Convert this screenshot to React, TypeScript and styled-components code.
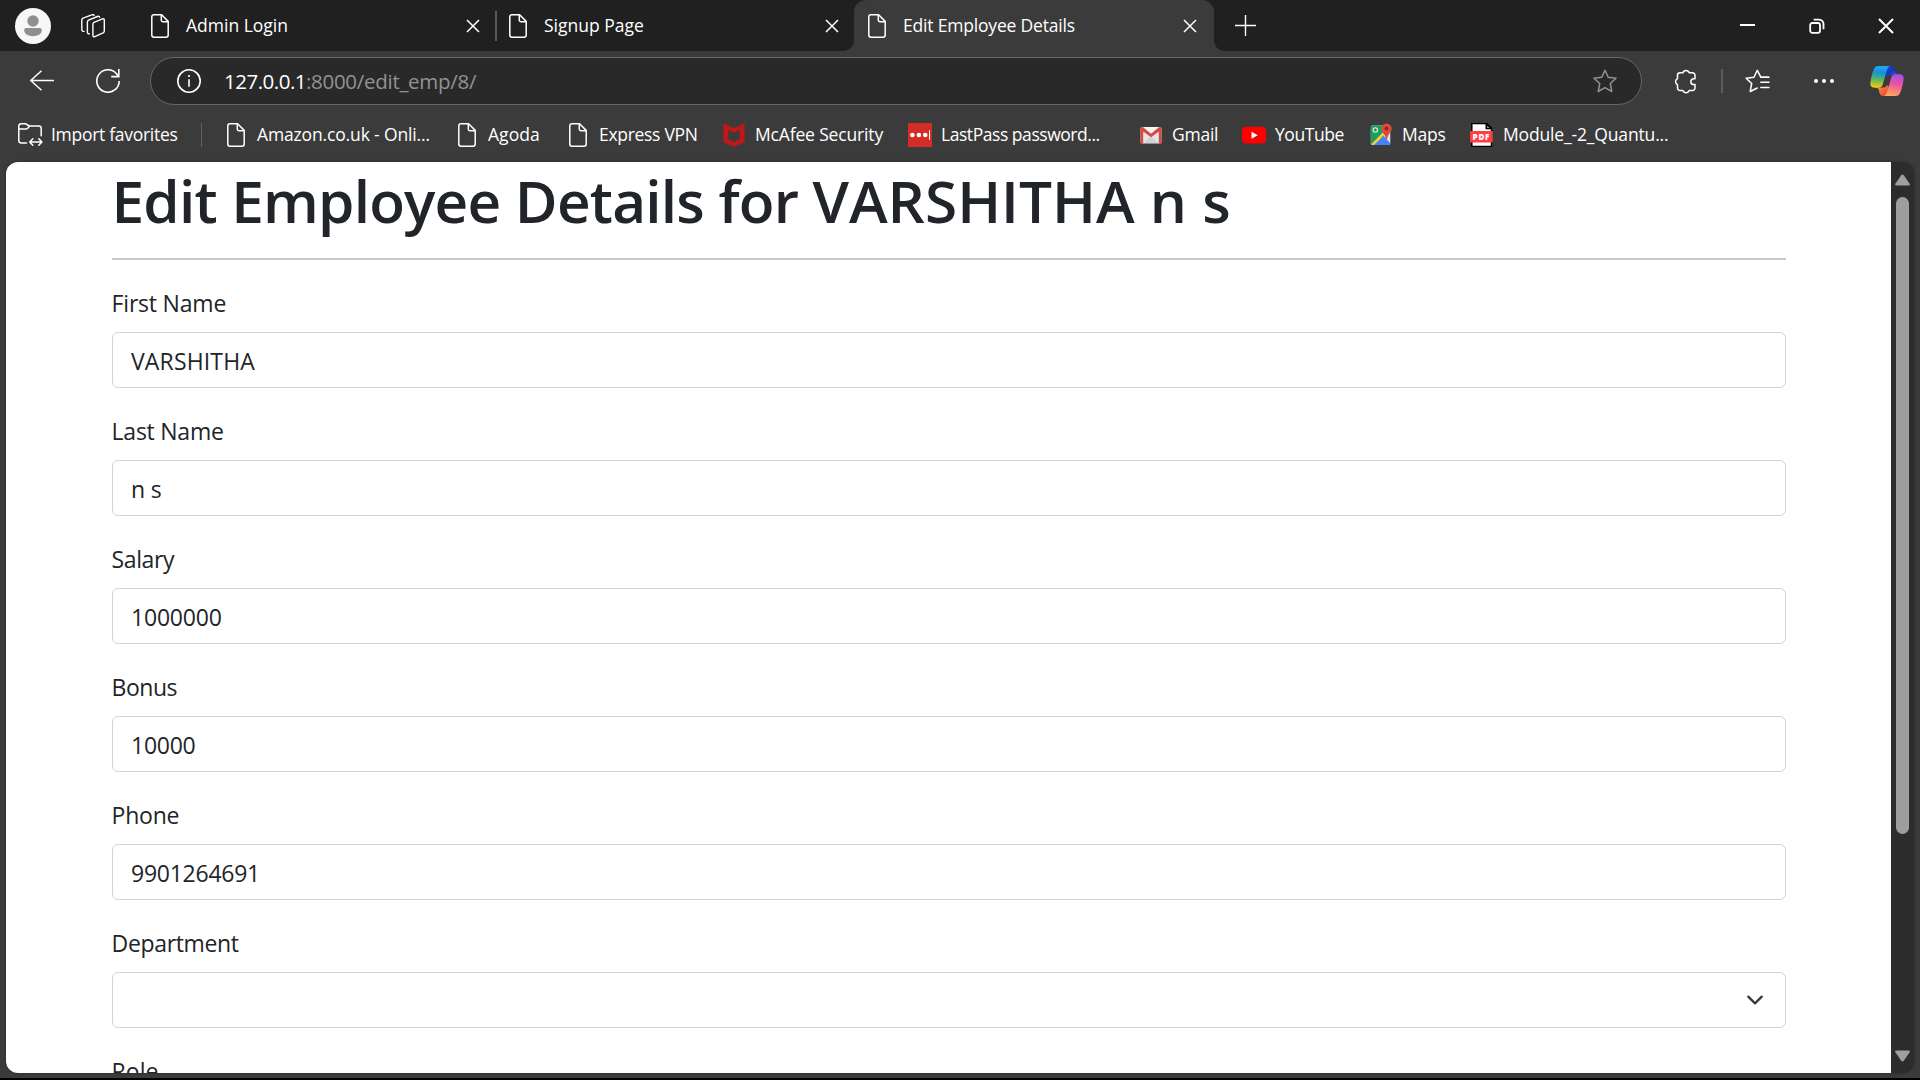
import React from "react";
import styled, { createGlobalStyle } from "styled-components";

const GlobalStyle = createGlobalStyle`
  * { box-sizing: border-box; }
  html, body { margin: 0; padding: 0; overflow: hidden; background: #000; }
  svg { display: block; flex: none; }
`;

const uiFont = `"Open Sans", "Noto Sans", sans-serif`;

const Browser = styled.div`
  width: 1920px;
  height: 1080px;
  display: flex;
  flex-direction: column;
  background: #3b3b3b;
  border-bottom: 2px solid #000;
  font-family: ${uiFont};
  color: #fff;
  overflow: hidden;
`;

const Text = styled.span<{ $track?: number }>`
  letter-spacing: ${(p) => p.$track ?? 0}px;
  white-space: pre;
`;

/* Tab strip */
const TabStrip = styled.div`
  flex: none;
  height: 51px;
  display: flex;
  align-items: center;
  background: #202020;
  font-size: 17.5px;
`;

const Profile = styled.div`
  width: 66px;
  height: 51px;
  padding: 8px 0 0 15px;
`;

const Workspaces = styled.div`
  width: 71px;
  padding-left: 15px;
`;

const Tab = styled.div<{ $width: number; $end: number; $active?: boolean }>`
  position: relative;
  width: ${(p) => p.$width}px;
  height: 51px;
  display: flex;
  align-items: center;
  padding: 0 ${(p) => p.$end}px 0 14px;
  border-radius: 12px 12px 0 0;
  background: ${(p) => (p.$active ? "#3b3b3b" : "transparent")};

  &::before,
  &::after {
    content: "";
    display: ${(p) => (p.$active ? "block" : "none")};
    position: absolute;
    bottom: 0;
    width: 10px;
    height: 10px;
  }
  &::before {
    left: -10px;
    background: radial-gradient(circle at 0 0, transparent 9.5px, #3b3b3b 10px);
  }
  &::after {
    right: -10px;
    background: radial-gradient(circle at 100% 0, transparent 9.5px, #3b3b3b 10px);
  }
`;

const TabTitle = styled(Text)`
  flex: 1;
  margin-left: 17px;
  padding-bottom: 1.5px;
`;

const TabDivider = styled.div`
  width: 2px;
  height: 30px;
  margin-right: -2px;
  background: #5a5a5a;
`;

const NewTab = styled.div`
  margin-left: 21px;
  padding-bottom: 1px;
`;

const WindowControls = styled.div`
  margin-left: auto;
  display: flex;
  gap: 53px;
  padding-right: 26px;
`;

/* Toolbar */
const Toolbar = styled.div`
  flex: none;
  height: 60px;
  padding-top: 6px;
  display: flex;
  align-items: flex-start;
`;

const ToolSlot = styled.div<{ $left: number }>`
  height: 48px;
  margin-left: ${(p) => p.$left}px;
  display: flex;
  align-items: center;
`;

const AddressBar = styled.div`
  width: 1492px;
  height: 48px;
  margin-left: 30px;
  padding: 0 24px 0 26px;
  display: flex;
  align-items: center;
  border: 1.5px solid #666;
  border-radius: 24px;
  background: #292929;
  font-size: 20.5px;
`;

const Host = styled(Text)`
  margin-left: 23px;
  color: #fff;
`;

const Path = styled(Text)`
  flex: 1;
  color: #929292;
`;

const ToolDivider = styled.div`
  width: 2px;
  height: 24px;
  background: #5c5c5c;
`;

/* Favourites bar */
const Favorites = styled.div`
  flex: none;
  height: 51px;
  padding: 0 0 3px 18px;
  display: flex;
  align-items: center;
  font-size: 17.5px;
`;

const Favorite = styled.div<{ $width: number; $gap?: number }>`
  width: ${(p) => p.$width}px;
  height: 24px;
  display: flex;
  align-items: center;
  gap: ${(p) => p.$gap ?? 9}px;
`;

const FavoriteName = styled(Text)`
  padding-bottom: 1.5px;
`;

const FavoriteDivider = styled.div`
  width: 1px;
  height: 24px;
  margin-right: 22px;
  background: #5f5f5f;
`;

/* Page */
const Viewport = styled.div`
  flex: none;
  width: 1908px;
  height: 911px;
  margin-left: 6px;
  display: flex;
  border-radius: 12px;
  overflow: hidden;
  background: #2c2c2c;
  box-shadow: 0 0 3px rgba(0, 0, 0, 0.35);
`;

const Page = styled.main`
  width: 1885px;
  height: 911px;
  padding: 2px 105px 0 106px;
  background: #fff;
  color: #212529;
  overflow: hidden;
`;

const Heading = styled.h1`
  margin: 0 0 0 -0.5px;
  font-size: 58.5px;
  line-height: 72px;
  font-weight: 600;
`;

const Rule = styled.hr`
  margin: 22px 0 24px;
  border: 0;
  height: 2px;
  background: #c8c8c8;
`;

const Field = styled.div`
  margin-bottom: 24px;
`;

const Label = styled.div<{ $track?: number }>`
  height: 48px;
  padding-top: 1px;
  margin-left: -0.4px;
  font-size: 23px;
  line-height: 36px;
  letter-spacing: ${(p) => p.$track ?? 0}px;
`;

const Control = styled.div<{ $track?: number }>`
  height: 56px;
  padding: 1px 21px 0 18px;
  display: flex;
  align-items: center;
  border: 1px solid #ced4da;
  border-radius: 6px;
  background: #fff;
  font-size: 23px;
  letter-spacing: ${(p) => p.$track ?? 0}px;
`;

const Chevron = styled.svg`
  margin: 0 0 1px auto;
`;

const Scrollbar = styled.div`
  width: 23px;
  padding: 12px 4px 11px;
  display: flex;
  flex-direction: column;
  align-items: center;
`;

const Thumb = styled.div`
  width: 13px;
  height: 637px;
  margin: 11px 0 auto;
  border-radius: 7px;
  background: #9e9e9e;
`;

const FileIcon = () => (
  <svg width="18" height="24" viewBox="0 0 18 24" fill="none" stroke="#fff" strokeWidth="1.5" strokeLinejoin="round">
    <path d="M3 .8h7.6L17.2 7.400V21a2.200 2.200 0 0 1-2.200 2.200H3A2.200 2.200 0 0 1 .8 21V3A2.200 2.200 0 0 1 3 .8Z" />
    <path d="M10.300.8v5.200a1.700 1.700 0 0 0 1.700 1.700h5.200" />
  </svg>
);

const FavFile = styled.div`
  width: 24px;
  padding-left: 3px;
`;

const CloseIcon = () => (
  <svg width="14" height="14" viewBox="0 0 14 14" stroke="#fff" strokeWidth="1.5">
    <path d="m1 1 12 12M13 1 1 13" />
  </svg>
);

const ProfileIcon = () => (
  <svg width="36" height="36" viewBox="0 0 36 36">
    <circle cx="18" cy="18" r="18" fill="#f7f7f7" />
    <circle cx="18" cy="13" r="5.700" fill="#8f8f8f" />
    <path d="M11.500 20h13a2.200 2.200 0 0 1 2.300 2.300c0 3.800-4.200 5.900-8.800 5.900s-8.800-2.100-8.800-5.900a2.200 2.200 0 0 1 2.300-2.300Z" fill="#8f8f8f" />
  </svg>
);

const WorkspacesIcon = () => (
  <svg width="24" height="24" viewBox="0 0 24 24" fill="none" stroke="#fff" strokeWidth="1.400" strokeLinejoin="round" strokeLinecap="round">
    <path d="M13 8.300 21.500 4.900c1-.4 1.800.1 1.800 1.100v11c0 .9-.4 1.500-1.200 1.900l-8.300 3.700c-1 .4-1.900-.1-1.900-1.100V10.200c0-.9.300-1.500 1.100-1.900Z" />
    <path d="M8.300 19.800c-1.200.1-1.900-.5-1.900-1.500V8c0-.9.400-1.500 1.200-1.900l8.800-3.600c1-.4 1.900-.1 2.200.8" />
    <path d="M3 17.400c-1.300.1-2.200-.6-2.200-1.700V6c0-.9.400-1.500 1.200-1.900L10.800.8c1-.3 1.900-.1 2.300.6" />
  </svg>
);

const starPath = "M12 1.300l3.200 6.900 7.800 1-5.700 5.300 1.500 8-6.800-3.800-6.800 3.800 1.500-8L1 9.200l7.800-1Z";

const ImportIcon = () => (
  <svg width="25" height="24" viewBox="0 0 25 24" fill="none" stroke="#fff" strokeWidth="1.500" strokeLinejoin="round" strokeLinecap="round">
    <path d="M8.500 20H3.200A2.400 2.400 0 0 1 .8 17.600V3.200A2.400 2.400 0 0 1 3.200.8h4.600l3.400 2.200h9.600a2.400 2.400 0 0 1 2.400 2.400v7.400" />
    <path d="M.8 6h7c.8 0 1.400-.3 1.900-.8l1.800-2.100" />
    <path d="M12.200 19h11.500M14.800 15.800 11.700 19l3.100 3.200M20.800 15.800l3.100 3.200-3.100 3.200" />
  </svg>
);

const McAfeeIcon = () => (
  <svg width="24" height="24" viewBox="0 0 24 24">
    <path fillRule="evenodd" fill="#c01818" d="M1.400.3 12 5.200 22.600.3v18.800L12 24 1.400 19.100ZM6.300 7v9.200l5.700 2.700 5.700-2.700V7L12 9.800Z" />
  </svg>
);

const LastPassIcon = () => (
  <svg width="24" height="24" viewBox="0 0 24 24">
    <path fill="#d32d27" d="M0 0h24v24H0z" />
    <g fill="#fff">
      <circle cx="4.400" cy="12" r="2.300" /><circle cx="10.900" cy="12" r="2.300" /><circle cx="17.300" cy="12" r="2.300" />
      <path d="M21 7.200h1v9.600h-1z" />
    </g>
  </svg>
);

const GmailIcon = () => (
  <svg width="24" height="24" viewBox="0 0 24 24">
    <rect x="1.500" y="4" width="21" height="16.500" rx="1.500" fill="#e6e6e6" />
    <path d="m5 20 7-7.500 7 7.500Z" fill="#d2d2d2" />
    <path d="M4.500 4h15L12 10.500Z" fill="#f5f5f5" />
    <path d="M1.500 20.500V5.500A1.500 1.500 0 0 1 4 4.300l8 6.400 8-6.400a1.500 1.500 0 0 1 2.500 1.200v15h-2.700V8.400L12 14.200 4.200 8.400v12.100Z" fill="#d54b3f" />
  </svg>
);

const YouTubeIcon = () => (
  <svg width="24" height="24" viewBox="0 0 24 24">
    <rect x="0" y="3.700" width="24" height="16.800" rx="4" fill="#f00" />
    <path d="m9.500 8.700 6.200 3.500-6.200 3.500Z" fill="#fff" />
  </svg>
);

const MapsIcon = () => (
  <svg width="24" height="24" viewBox="0 0 24 24">
    <rect x="1.800" y="2.500" width="19.500" height="19.500" rx="1.500" fill="#e2e2e2" />
    <path d="M1.800 4A1.500 1.500 0 0 1 3.300 2.500h12L15 10 2 22Z" fill="#1f9d5b" />
    <path d="m3 22 8.700-9 8.800 9Z" fill="#4584f3" />
    <path d="m2.200 21.300 12-12.200 1.800 2.400L5 22H3.300Z" fill="#f7ca3b" />
    <path d="m11.800 15.200 2.600-2.600 7 7.800-.8 1.600h-2Z" fill="#4584f3" />
    <circle cx="6.300" cy="7" r="2.200" fill="none" stroke="#e6f3eb" strokeWidth="1.100" />
    <path d="M17.500.4a5.200 5.200 0 0 1 5.200 5.200c0 3.800-4.100 5.300-4.700 10.800h-1c-.6-5.500-4.700-7-4.700-10.800A5.200 5.200 0 0 1 17.500.4Z" fill="#dd4b3e" />
    <circle cx="17.500" cy="5.500" r="1.900" fill="#822b23" />
  </svg>
);

const PdfMark = styled.text`
  font: 800 8px "Open Sans", sans-serif;
  letter-spacing: 0.4px;
  fill: #fff;
`;

const PdfIcon = () => (
  <svg width="24" height="24" viewBox="0 0 24 24">
    <path d="M1.800.6h14.700l5 4.600v18.200H1.800Z" fill="#fff" stroke="#000" strokeWidth="1.500" />
    <path d="M15.500 0h1.300l5.400 5v1.200h-6.700Z" fill="#000" />
    <path d="m17.300 2.900 1.900 1.800h-1.900Z" fill="#fff" />
    <rect x="0" y="8" width="22.700" height="11.500" rx=".8" fill="#ff3e43" />
    <PdfMark x="2.600" y="16.500" textLength="17.200">PDF</PdfMark>
  </svg>
);

const CopilotIcon = () => (
  <svg width="34" height="30" viewBox="0 0 34 30">
    <defs>
      <linearGradient id="cpLeft" x1=".5" y1="0" x2=".4" y2="1">
        <stop offset="0" stopColor="#22a7f2" /><stop offset=".3" stopColor="#1590dc" />
        <stop offset=".6" stopColor="#52b469" /><stop offset="1" stopColor="#f8cd0c" />
      </linearGradient>
      <linearGradient id="cpTop" x1="0" y1="0" x2="1" y2="1">
        <stop offset="0" stopColor="#1d4fd8" /><stop offset=".5" stopColor="#1136c4" /><stop offset="1" stopColor="#2b86ea" />
      </linearGradient>
      <linearGradient id="cpRight" x1=".6" y1="0" x2=".4" y2="1">
        <stop offset="0" stopColor="#a64df0" /><stop offset=".45" stopColor="#ee559b" /><stop offset="1" stopColor="#fdaa5c" />
      </linearGradient>
      <linearGradient id="cpBottom" x1="0" y1="0" x2="1" y2="1">
        <stop offset="0" stopColor="#ff9a3c" /><stop offset="1" stopColor="#e83a3a" />
      </linearGradient>
    </defs>
    <path d="M14 0h6.500c2.600 0 3.600 1.600 4.200 4 .6 2.500 1 4.300 3.600 4.400H21c-2 0-3.200.8-3.700 2.600L14 8Z" fill="url(#cpTop)" />
    <path d="M20 30h-6.500c-2.600 0-3.600-1.600-4.200-4-.6-2.500-1-4.300-3.600-4.400H13c2 0 3.200-.8 3.700-2.600l3.300 3Z" fill="url(#cpBottom)" />
    <path d="M8.500 0h12c-2 .2-2.900 1.600-3.600 4l-4 14c-.8 2.700-1.900 3.700-4.600 3.700H4.500C1.200 21.700 0 19.600.4 16.500.9 12.300 2 8.500 3 5.200 4.100 1.700 5.400 0 8.500 0Z" fill="url(#cpLeft)" />
    <path d="M25.500 30h-12c2-.2 2.900-1.600 3.600-4l4-14c.8-2.700 1.900-3.700 4.600-3.700h3.800c3.300 0 4.500 2.100 4.100 5.200-.5 4.200-1.600 8-2.600 11.300-1.100 3.500-2.400 5.200-5.500 5.200Z" fill="url(#cpRight)" />
  </svg>
);

const ArrowUp = () => (
  <svg width="15" height="12" viewBox="0 0 15 12">
    <path d="M6.200 1.200c.7-1 1.900-1 2.600 0l5.700 8.300c.7 1.100.2 2-1 2h-12c-1.200 0-1.700-.9-1-2Z" fill="#9e9e9e" />
  </svg>
);
const ArrowDown = () => (
  <svg width="15" height="12" viewBox="0 0 15 12">
    <path d="M6.200 10.800c.7 1 1.900 1 2.600 0l5.700-8.300c.7-1.100.2-2-1-2h-12c-1.200 0-1.700.9-1 2Z" fill="#9e9e9e" />
  </svg>
);

const favorites = [
  { text: "Amazon.co.uk - Onli...", track: -0.15, width: 231, icon: "file" },
  { text: "Agoda", track: 0.05, width: 111, icon: "file" },
  { text: "Express VPN", track: -0.3, width: 156, icon: "file" },
  { text: "McAfee Security", track: -0.16, width: 186, icon: "mcafee" },
  { text: "LastPass password...", track: -0.45, width: 231, icon: "lastpass" },
  { text: "Gmail", track: -0.25, width: 103, icon: "gmail" },
  { text: "YouTube", track: -0.43, width: 127, icon: "youtube" },
  { text: "Maps", track: -0.25, width: 101, icon: "maps" },
  { text: "Module_-2_Quantu...", track: -0.16, width: 220, icon: "pdf" },
];

const icons: Record<string, React.ReactNode> = {
  file: <FavFile><FileIcon /></FavFile>,
  mcafee: <McAfeeIcon />,
  lastpass: <LastPassIcon />,
  gmail: <GmailIcon />,
  youtube: <YouTubeIcon />,
  maps: <MapsIcon />,
  pdf: <PdfIcon />,
};

const fields = [
  { label: "First Name", lt: -0.2, value: "VARSHITHA", vt: 0.15 },
  { label: "Last Name", lt: -0.25, value: "n s", vt: -0.2 },
  { label: "Salary", lt: -0.4, value: "1000000", vt: -0.2 },
  { label: "Bonus", lt: -0.5, value: "10000", vt: -0.25 },
  { label: "Phone", lt: -0.25, value: "9901264691", vt: -0.25 },
];

export default function App() {
  return (
    <Browser>
      <GlobalStyle />
      <TabStrip>
        <Profile><ProfileIcon /></Profile>
        <Workspaces><WorkspacesIcon /></Workspaces>
        <Tab $width={358} $end={15}>
          <FileIcon />
          <TabTitle>Admin Login</TabTitle>
          <CloseIcon />
        </Tab>
        <TabDivider />
        <Tab $width={359} $end={15.5}>
          <FileIcon />
          <TabTitle>Signup Page</TabTitle>
          <CloseIcon />
        </Tab>
        <Tab $width={360} $end={17} $active>
          <FileIcon />
          <TabTitle $track={-0.19}>Edit Employee Details</TabTitle>
          <CloseIcon />
        </Tab>
        <NewTab>
          <svg width="21" height="21" viewBox="0 0 21 21" stroke="#fff" strokeWidth="1.400">
            <path d="M10.500 0v21M0 10.500h21" />
          </svg>
        </NewTab>
        <WindowControls>
          <svg width="17" height="16" viewBox="0 0 17 16"><path d="M1 6h15v2H1z" fill="#fff" /></svg>
          <svg width="16" height="16" viewBox="0 0 16 16" fill="none" stroke="#fff" strokeWidth="1.800">
            <rect x="1.200" y="5" width="9.800" height="9.800" rx="2" />
            <path d="M4.700 1.600h5.500a4.300 4.300 0 0 1 4.300 4.300v5.400" />
          </svg>
          <svg width="16" height="16" viewBox="0 0 16 16" stroke="#fff" strokeWidth="2"><path d="m1 1 14 14M15 1 1 15" /></svg>
        </WindowControls>
      </TabStrip>

      <Toolbar>
        <ToolSlot $left={29}>
          <svg width="25" height="24" viewBox="0 0 25 24" fill="none" stroke="#fff" strokeWidth="1.500">
            <path d="M12.500 1.800 1.800 11.500l10.700 9.800M1.800 11.500H25" />
          </svg>
        </ToolSlot>
        <ToolSlot $left={42}>
          <svg width="24" height="24" viewBox="0 0 24 24" fill="none" stroke="#fff" strokeWidth="1.600">
            <path d="M23.200 12A11.200 11.200 0 1 1 20.500 4.700L22.600 7.300M22.800 0v7.600h-7.600" />
          </svg>
        </ToolSlot>
        <AddressBar>
          <svg width="24" height="24" viewBox="0 0 24 24" fill="none" stroke="#fff" strokeWidth="1.600">
            <circle cx="12" cy="12" r="11.200" />
            <path d="M12 10.200v7.600" />
            <circle cx="12" cy="7" r="1.100" fill="#fff" stroke="none" />
          </svg>
          <Host $track={-0.5}>127.0.0.1</Host>
          <Path $track={-0.29}>:8000/edit_emp/8/</Path>
          <svg width="24" height="24" viewBox="0 0 24 24" fill="none" stroke="#929292" strokeWidth="1.500" strokeLinejoin="round">
            <path d={starPath} />
          </svg>
        </AddressBar>
        <ToolSlot $left={32}>
          <svg width="24" height="25" viewBox="0 0 24 25" fill="none" stroke="#fff" strokeWidth="1.500" strokeLinejoin="round">
            <path d="M6 3.800h2.900a3.300 3.300 0 0 1 6.300 0h3.300a2.500 2.500 0 0 1 2.500 2.500v3.500h-1.300a2.900 2.900 0 0 0 0 5.800H21v3.300a2.500 2.500 0 0 1-2.500 2.500h-3.300a3.300 3.300 0 0 1-6.300 0H6a2.500 2.500 0 0 1-2.500-2.500v-3.300a3.300 3.300 0 0 1 0-6V6.300A2.500 2.500 0 0 1 6 3.800Z" />
          </svg>
        </ToolSlot>
        <ToolSlot $left={23}><ToolDivider /></ToolSlot>
        <ToolSlot $left={22}>
          <svg width="25" height="24" viewBox="0 0 25 24" fill="none" stroke="#fff" strokeWidth="1.500" strokeLinejoin="round" strokeLinecap="round">
            <path d="M23.200 8.200h-7.400L12.300 1.300 9 8.200l-7.900 1 5.600 5.300-1.500 8L12.200 19" />
            <path d="M15.800 8.200h8.200M15.800 13.300h8.200M15.800 18.400h8.200" />
          </svg>
        </ToolSlot>
        <ToolSlot $left={43}>
          <svg width="22" height="6" viewBox="0 0 22 6" fill="#fff">
            <circle cx="3" cy="3" r="2" /><circle cx="11" cy="3" r="2" /><circle cx="19" cy="3" r="2" />
          </svg>
        </ToolSlot>
        <ToolSlot $left={35}><CopilotIcon /></ToolSlot>
      </Toolbar>

      <Favorites>
        <Favorite $width={183} $gap={8}>
          <ImportIcon />
          <FavoriteName $track={-0.29}>Import favorites</FavoriteName>
        </Favorite>
        <FavoriteDivider />
        {favorites.map((f) => (
          <Favorite key={f.text} $width={f.width}>
            {icons[f.icon]}
            <FavoriteName $track={f.track}>{f.text}</FavoriteName>
          </Favorite>
        ))}
      </Favorites>

      <Viewport>
        <Page>
          <Heading>
            <Text $track={-0.8}>{"Edit Employee Details for "}</Text>
            <Text $track={0}>VARSHITHA n s</Text>
          </Heading>
          <Rule />
          {fields.map((f) => (
            <Field key={f.label}>
              <Label $track={f.lt}>{f.label}</Label>
              <Control $track={f.vt}>{f.value}</Control>
            </Field>
          ))}
          <Field>
            <Label $track={-0.36}>Department</Label>
            <Control>
              <Chevron width="18" height="18" viewBox="0 0 16 16" fill="none" stroke="#343a40" strokeWidth="2" strokeLinecap="round" strokeLinejoin="round">
                <path d="m2 5 6 6 6-6" />
              </Chevron>
            </Control>
          </Field>
          <Label>Role</Label>
        </Page>
        <Scrollbar>
          <ArrowUp />
          <Thumb />
          <ArrowDown />
        </Scrollbar>
      </Viewport>
    </Browser>
  );
}
